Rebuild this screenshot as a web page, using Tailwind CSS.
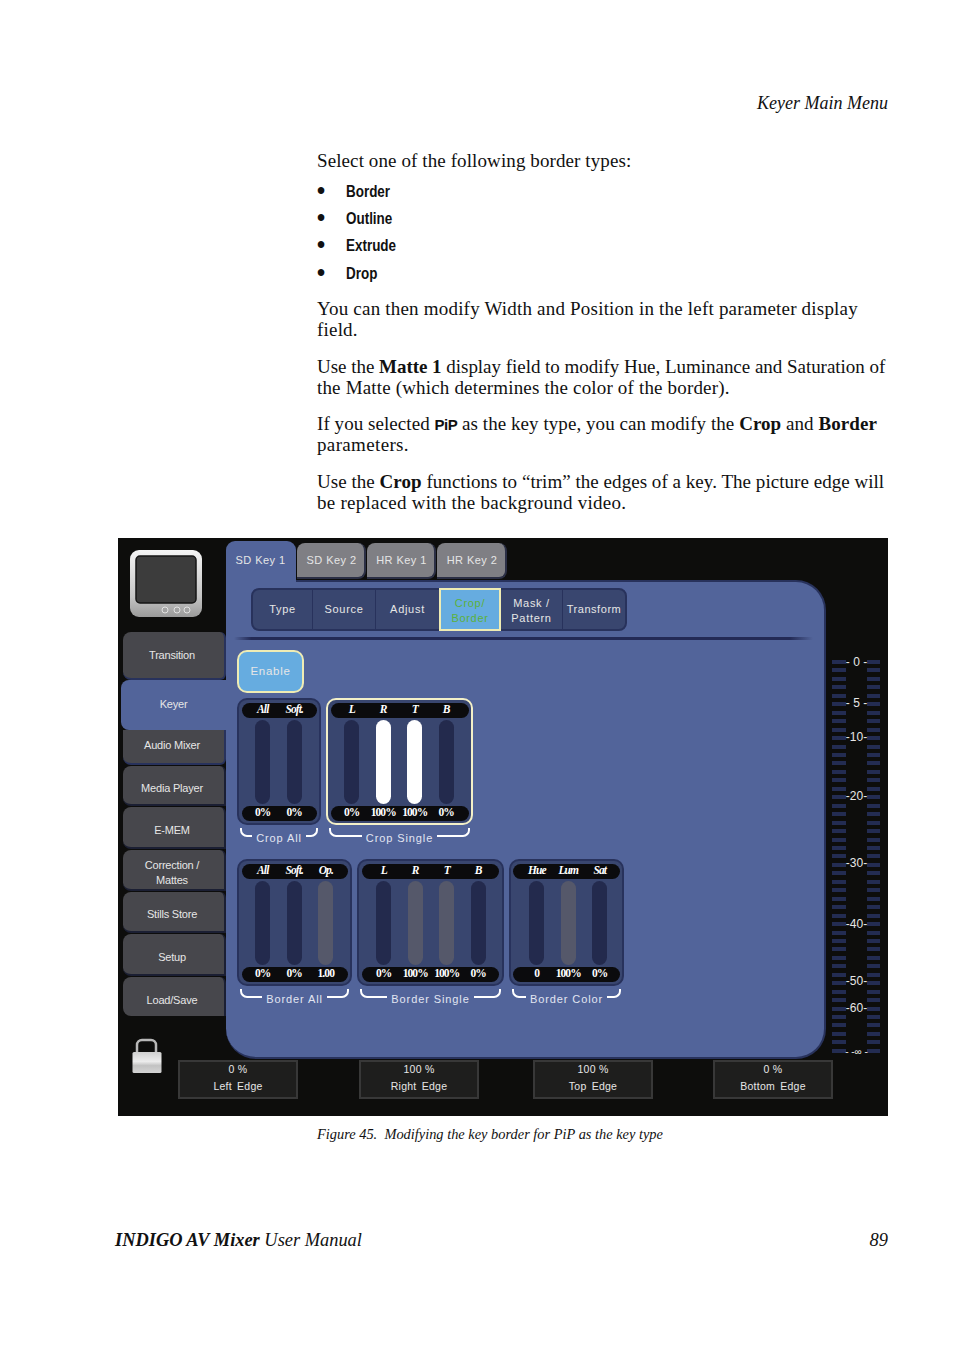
<!DOCTYPE html>
<html lang="en">
<head>
  <meta charset="UTF-8">
  <title>Keyer Main Menu</title>
  <script src="https://cdn.jsdelivr.net/npm/@tailwindcss/browser@4"></script>
</head>
<body class="bg-white text-[#111] font-['Liberation_Serif',serif]">
  <div class="w-[954px] h-[1350px] flex flex-col overflow-hidden">

    <p class="mt-[93px] mr-[66px] text-right italic text-[18px] leading-[21px]">Keyer Main Menu</p>

    <div class="ml-[317px] w-[575px] text-[19px] leading-[21px] whitespace-nowrap">
      <p class="mt-[36px] tracking-[0.1px]">Select one of the following border types:</p>
      <ul class="mt-[7px] font-['Liberation_Sans',sans-serif] font-bold text-[16px]">
        <li class="flex items-center h-[27px]"><span class="w-[29px] text-[23px]">•</span><span class="scale-x-[0.84] origin-left">Border</span></li>
        <li class="flex items-center h-[27px]"><span class="w-[29px] text-[23px]">•</span><span class="scale-x-[0.84] origin-left">Outline</span></li>
        <li class="flex items-center h-[27px]"><span class="w-[29px] text-[23px]">•</span><span class="scale-x-[0.84] origin-left">Extrude</span></li>
        <li class="flex items-center h-[28px]"><span class="w-[29px] text-[23px]">•</span><span class="scale-x-[0.84] origin-left">Drop</span></li>
      </ul>
      <p class="mt-[11px] tracking-[0.2px]">You can then modify Width and Position in the left parameter display<br>field.</p>
      <p class="mt-[16px]"><span class="tracking-[-0.03px]">Use the <b>Matte 1</b> display field to modify Hue, Luminance and Saturation of</span><br><span class="tracking-[0.17px]">the Matte (which determines the color of the border).</span></p>
      <p class="mt-[15px]"><span class="tracking-[0.06px]">If you selected <b class="font-['Liberation_Sans',sans-serif] text-[15px] leading-none tracking-[-0.5px]">PiP</b> as the key type, you can modify the <b>Crop</b> and <b>Border</b></span><br><span class="tracking-[0.35px]">parameters.</span></p>
      <p class="mt-[16px]"><span class="tracking-[0.04px]">Use the <b>Crop</b> functions to “trim” the edges of a key. The picture edge will</span><br><span class="tracking-[0.25px]">be replaced with the background video.</span></p>
    </div>

    <!-- figure -->
    <div class="relative mt-[25px] ml-[118px] w-[770px] h-[578px] bg-[#0d0d0c] flex flex-col shrink-0 font-['Liberation_Sans',sans-serif] text-[#e6e6e6] text-[11px]">
      <div class="flex h-[521px]">

        <!-- left column -->
        <div class="w-[108px] shrink-0">
          <svg class="mt-[12px] ml-[12px]" width="72" height="67" viewBox="0 0 72 67">
            <defs>
              <linearGradient id="mon" x1="0" y1="0" x2="0" y2="1">
                <stop offset="0" stop-color="#f4f4f4"/>
                <stop offset="0.7" stop-color="#c4c4c4"/>
                <stop offset="1" stop-color="#9a9a9a"/>
              </linearGradient>
            </defs>
            <rect x="0" y="0" width="72" height="67" rx="9" fill="url(#mon)"/>
            <rect x="6" y="6" width="60" height="47" rx="4" fill="#3c3c3c" stroke="#141414" stroke-width="1.5"/>
            <circle cx="35" cy="60" r="3" fill="#a2a2a2" stroke="#e2e2e2"/>
            <circle cx="47" cy="60" r="3" fill="#a2a2a2" stroke="#e2e2e2"/>
            <circle cx="57" cy="60" r="3" fill="#a2a2a2" stroke="#e2e2e2"/>
          </svg>
          <div class="mt-[15px] ml-[5px] flex flex-col tracking-[-0.2px]">
            <div class="h-[48px] pr-[3px] flex items-center justify-center text-center rounded-l-[8px] bg-[#47474c] border-r-2 border-b-2 border-[#28325c] rounded-tr-[6px] rounded-br-[6px]">Transition</div>
            <div class="h-[50px] -ml-[2px] pb-[2px] flex items-center justify-center text-center rounded-l-[8px] bg-[#52649a]">Keyer</div>
            <div class="h-[35px] pr-[3px] pb-[3px] flex items-center justify-center text-center rounded-bl-[8px] bg-[#47474c] border-r-2 border-b-2 border-[#28325c] rounded-br-[6px]">Audio Mixer</div>
            <div class="mt-[1px] h-[40px] pr-[3px] pt-[7px] flex items-center justify-center text-center rounded-l-[8px] bg-[#47474c] border-r-2 border-b-2 border-[#1b1f33] rounded-tr-[6px]">Media Player</div>
            <div class="mt-[1px] h-[42px] pr-[3px] pt-[6px] flex items-center justify-center text-center rounded-l-[8px] bg-[#47474c] border-r-2 border-b-2 border-[#1b1f33] rounded-tr-[6px]">E-MEM</div>
            <div class="mt-[1px] h-[41px] pr-[3px] pt-[6px] flex items-center justify-center text-center leading-[15px] rounded-l-[8px] bg-[#47474c] border-r-2 border-b-2 border-[#1b1f33] rounded-tr-[6px]">Correction /<br>Mattes</div>
            <div class="mt-[1px] h-[41px] pr-[3px] pt-[6px] flex items-center justify-center text-center rounded-l-[8px] bg-[#47474c] border-r-2 border-b-2 border-[#1b1f33] rounded-tr-[6px]">Stills Store</div>
            <div class="mt-[1px] h-[42px] pr-[3px] pt-[6px] flex items-center justify-center text-center rounded-l-[8px] bg-[#47474c] border-r-2 border-b-2 border-[#1b1f33] rounded-tr-[6px]">Setup</div>
            <div class="mt-[1px] h-[39px] pr-[3px] pt-[8px] flex items-center justify-center text-center rounded-l-[8px] bg-[#47474c] border-r-2 border-[#1b1f33] rounded-tr-[6px]">Load/Save</div>
          </div>
        </div>

        <!-- centre column -->
        <div class="w-[600px] shrink-0 flex flex-col">
          <div class="h-[42px] flex items-start tracking-[0.45px]">
            <div class="relative z-10 mt-[3px] w-[70px] h-[41px] pt-[11px] pr-[1px] text-center rounded-t-[9px] bg-[#52649a]">SD Key 1</div>
            <div class="mt-[5px] ml-[1px] w-[69px] h-[36px] pl-[2px] flex items-center justify-center rounded-t-[8px] rounded-br-[8px] bg-[#7f7f84] border-b-2 border-r-2 border-[#2b2f45]">SD Key 2</div>
            <div class="mt-[5px] ml-[1px] w-[69px] h-[36px] pl-[2px] flex items-center justify-center rounded-t-[8px] rounded-br-[8px] bg-[#7f7f84] border-b-2 border-r-2 border-[#2b2f45]">HR Key 1</div>
            <div class="mt-[5px] ml-[1px] w-[70px] h-[36px] pl-[2px] flex items-center justify-center rounded-t-[8px] rounded-br-[8px] bg-[#7f7f84] border-b-2 border-r-2 border-[#2b2f45]">HR Key 2</div>
          </div>

          <div class="h-[479px] bg-[#52649a] border-t-2 border-r-2 border-b-2 border-[#28325c] rounded-tr-[30px] rounded-b-[30px] flex flex-col tracking-[0.7px]">
            <div class="mt-[6px] ml-[25px] w-[376px] h-[43px] flex bg-[#39466f] border-2 border-[#28325c] rounded-[8px]">
              <div class="w-[60px] flex items-center justify-center border-r border-[#28325c]">Type</div>
              <div class="w-[63px] flex items-center justify-center border-r border-[#28325c]">Source</div>
              <div class="w-[63px] flex items-center justify-center">Adjust</div>
              <div class="-my-[2px] w-[62px] pt-[2px] flex items-center justify-center text-center leading-[15px] text-[#5cb13c] bg-[#66ace0] border-2 border-[#efecb4]">Crop/<br>Border</div>
              <div class="w-[62px] pt-[2px] flex items-center justify-center text-center leading-[15px] border-r border-[#28325c]">Mask /<br>Pattern</div>
              <div class="flex-1 flex items-center justify-center tracking-[0.55px]">Transform</div>
            </div>
            <div class="mt-[6px] ml-[8px] w-[579px] h-[3px] bg-[linear-gradient(to_right,#52649a,#232a55_3%,#232a55_96%,#52649a)]"></div>
            <div class="mt-[10px] ml-[11px] w-[67px] h-[43px] flex items-center justify-center bg-[#66ace0] border-2 border-[#efecb4] rounded-[10px] text-[11.5px]">Enable</div>
            <div id="row-crop" class="mt-[5px] ml-[11px] flex gap-[5px]"></div>
            <div id="row-border" class="mt-[14px] ml-[11px] flex gap-[5px]"></div>
          </div>
        </div>

        <!-- level meter -->
        <div class="w-[62px] shrink-0 pt-[122px]">
          <div class="ml-[6px] h-[393px] flex">
            <div id="meter-l" class="w-[14px] flex flex-col justify-between"></div>
            <div class="relative w-[21px] text-[12px]">
              <span class="absolute top-[2px] left-1/2 -translate-x-1/2 -translate-y-1/2 whitespace-nowrap">- 0 -</span>
              <span class="absolute top-[43px] left-1/2 -translate-x-1/2 -translate-y-1/2 whitespace-nowrap">- 5 -</span>
              <span class="absolute top-[77px] left-1/2 -translate-x-1/2 -translate-y-1/2 whitespace-nowrap">-10-</span>
              <span class="absolute top-[136px] left-1/2 -translate-x-1/2 -translate-y-1/2 whitespace-nowrap">-20-</span>
              <span class="absolute top-[203px] left-1/2 -translate-x-1/2 -translate-y-1/2 whitespace-nowrap">-30-</span>
              <span class="absolute top-[264px] left-1/2 -translate-x-1/2 -translate-y-1/2 whitespace-nowrap">-40-</span>
              <span class="absolute top-[321px] left-1/2 -translate-x-1/2 -translate-y-1/2 whitespace-nowrap">-50-</span>
              <span class="absolute top-[348px] left-1/2 -translate-x-1/2 -translate-y-1/2 whitespace-nowrap">-60-</span>
              <span class="absolute top-[391px] left-1/2 -translate-x-1/2 -translate-y-1/2 whitespace-nowrap text-[10px]">- -∞ -</span>
            </div>
            <div id="meter-r" class="w-[13px] flex flex-col justify-between"></div>
          </div>
        </div>
      </div>

      <!-- edge read-outs -->
      <div class="mt-[1px] flex text-[10.5px] tracking-[0.25px] leading-[17px] text-center">
        <div class="ml-[60px] w-[120px] h-[39px] bg-[#1e1e1d] border-2 border-[#383838]"><div class="-mt-[1px]">0 %<br><span class="[word-spacing:2px]">Left Edge</span></div></div>
        <div class="ml-[61px] w-[120px] h-[39px] bg-[#1e1e1d] border-2 border-[#383838]"><div class="-mt-[1px]">100 %<br><span class="[word-spacing:2px]">Right Edge</span></div></div>
        <div class="ml-[54px] w-[120px] h-[39px] bg-[#1e1e1d] border-2 border-[#383838]"><div class="-mt-[1px]">100 %<br><span class="[word-spacing:2px]">Top Edge</span></div></div>
        <div class="ml-[60px] w-[120px] h-[39px] bg-[#1e1e1d] border-2 border-[#383838]"><div class="-mt-[1px]">0 %<br><span class="[word-spacing:2px]">Bottom Edge</span></div></div>
      </div>

      <!-- lock sits over the corner of the read-out row -->
      <svg class="absolute left-[14px] top-[500px]" width="30" height="36" viewBox="0 0 30 36">
        <defs>
          <linearGradient id="lock" x1="0" y1="0" x2="0" y2="1">
            <stop offset="0" stop-color="#cfcfcf"/>
            <stop offset="0.45" stop-color="#ececec"/>
            <stop offset="0.65" stop-color="#c2c2c2"/>
            <stop offset="1" stop-color="#d4d4d4"/>
          </linearGradient>
        </defs>
        <path d="M5 15V7a5 5 0 0 1 5-5h9a5 5 0 0 1 5 5v8" fill="none" stroke="#b8b8b8" stroke-width="2.5"/>
        <rect x="0.5" y="14" width="29" height="21" rx="1.5" fill="url(#lock)"/>
      </svg>
    </div>

    <p class="mt-[8px] ml-[317px] h-[20px] italic text-[14.4px] leading-[20px]">Figure 45.&nbsp; Modifying the key border for PiP as the key type</p>

    <div class="mt-[86px] ml-[115px] w-[773px] flex justify-between text-[18.4px] leading-[21px] italic">
      <p><b>INDIGO AV Mixer</b> User Manual</p>
      <p>89</p>
    </div>
  </div>

  <script>
    const groups = {
      'row-crop': [
        { label: 'Crop All', w: 'w-[84px]', pad: 'pl-[3px] pr-[2px]', inner: 'pl-[5px]', cols: [['All','0%','off'],['Soft.','0%','off']] },
        { label: 'Crop Single', w: 'w-[147px]', pad: 'pl-[3px] pr-[2px]', inner: 'pl-[5px]', selected: true, cols: [['L','0%','off'],['R','100%','on'],['T','100%','on'],['B','0%','off']] }
      ],
      'row-border': [
        { label: 'Border All', w: 'w-[115px]', pad: 'pl-[3px] pr-[2px]', inner: 'pl-[5px]', cols: [['All','0%','off'],['Soft.','0%','off'],['Op.','1.00','dim']] },
        { label: 'Border Single', w: 'w-[147px]', pad: 'pl-[3px] pr-[3px]', inner: 'pl-[6px]', cols: [['L','0%','off'],['R','100%','dim'],['T','100%','dim'],['B','0%','off']] },
        { label: 'Border Color', w: 'w-[115px]', pad: 'pl-[2px] pr-[2px]', inner: 'pl-[8px]', cols: [['Hue','0','off'],['Lum','100%','dim'],['Sat','0%','off']] }
      ]
    };
    const trackColor = { off: 'bg-[#232a4d]', on: 'bg-white', dim: 'bg-[#55586a]' };

    function renderGroup(g) {
      const frame = g.selected ? 'border-[#f3f0c8]' : 'border-[#28325c]';
      const heads = g.cols.map(c => `<span class="w-[31.5px] text-center">${c[0]}</span>`).join('');
      const tracks = g.cols.map(c => `<div class="w-[31.5px] flex justify-center"><div class="w-[15px] h-[84px] rounded-full ${trackColor[c[2]]}"></div></div>`).join('');
      const values = g.cols.map(c => `<span class="w-[31.5px] text-center">${c[1]}</span>`).join('');
      return `
        <div class="${g.w}">
          <div class="h-[127px] pt-[3px] ${g.pad} bg-[#39466f] border-2 ${frame} rounded-[10px] font-['Liberation_Serif',serif] text-white font-bold text-[11.5px] tracking-[-0.9px]">
            <div class="h-[15px] pb-[2px] flex items-center ${g.inner} bg-[#0b0b0d] rounded-full italic">${heads}</div>
            <div class="mt-[2px] flex ${g.inner}">${tracks}</div>
            <div class="mt-[2px] h-[15px] pb-[1px] flex items-center ${g.inner} bg-[#0b0b0d] rounded-full">${values}</div>
          </div>
          <div class="flex px-[3px]">
            <div class="flex-1 mt-[3px] h-[9px] border-l-2 border-b-2 border-white rounded-bl-[7px]"></div>
            <span class="px-[4px] mt-[6px] leading-[14px] tracking-[0.9px] whitespace-nowrap text-[#e2e6f2]">${g.label}</span>
            <div class="flex-1 mt-[3px] h-[9px] border-r-2 border-b-2 border-white rounded-br-[7px]"></div>
          </div>
        </div>`;
    }

    Object.keys(groups).forEach(id => {
      document.getElementById(id).innerHTML = groups[id].map(renderGroup).join('');
    });

    ['meter-l', 'meter-r'].forEach(id => {
      let bars = '';
      for (let i = 0; i < 47; i++) bars += '<div class="h-[4px] bg-[#232c52]"></div>';
      document.getElementById(id).innerHTML = bars;
    });
  </script>
</body>
</html>
